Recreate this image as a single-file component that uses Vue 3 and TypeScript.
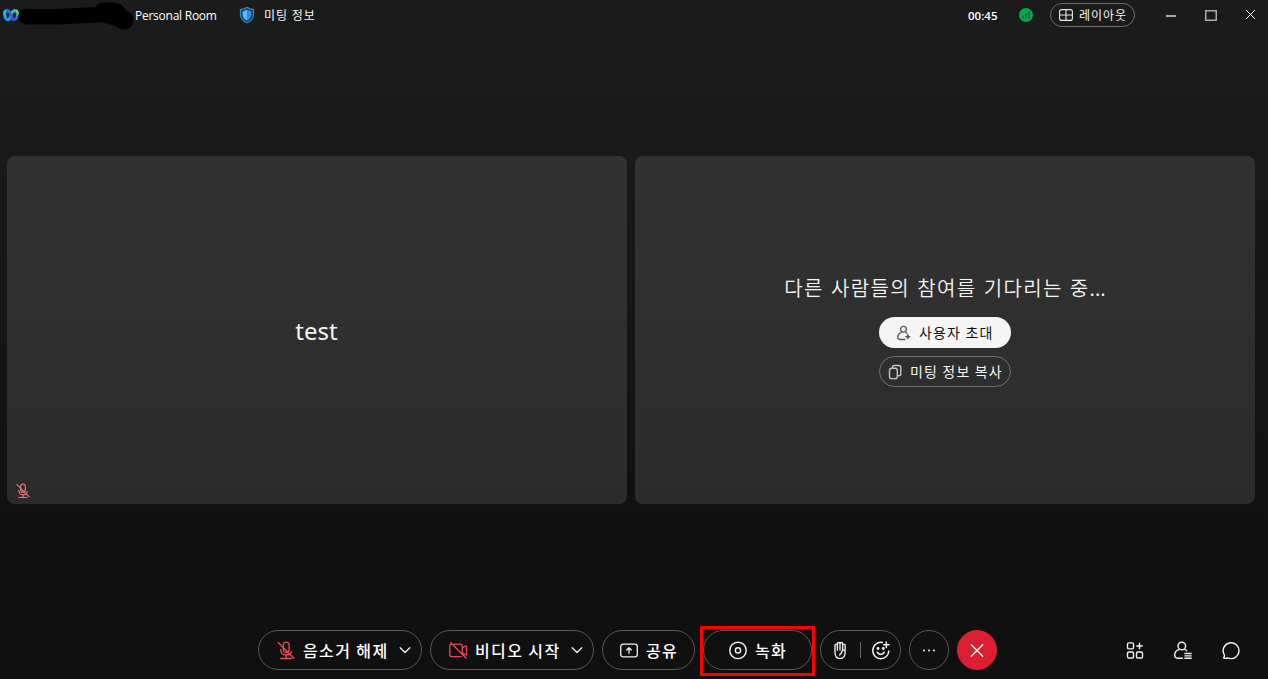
<script setup lang="ts">
interface MediaControl {
  id: string
  label: string
}

const mediaControls: MediaControl[] = [
  { id: 'audio', label: '음소거 해제' },
  { id: 'video', label: '비디오 시작' },
]
</script>

<template>
  <div class="window">
    <header class="titlebar">
      <svg class="logo" viewBox="0 0 16 13">
        <defs>
          <linearGradient id="logo-left" x1="0" y1="0" x2="0" y2="1">
            <stop offset="0" stop-color="#25c6d8" /><stop offset="1" stop-color="#1a9df0" />
          </linearGradient>
          <linearGradient id="logo-right" x1="0" y1="1" x2="1" y2="0">
            <stop offset="0" stop-color="#244cf0" /><stop offset=".55" stop-color="#2d68ed" /><stop offset="1" stop-color="#5ee45c" />
          </linearGradient>
        </defs>
        <path d="M4.500 2C2.700 1.500 1.400 2.500 1.600 4.800 1.900 8.200 2.900 10.700 5 10.700c2 0 2.600-2.700 3.300-5.200C8.900 3 9.800 1.900 11.200 1.900" fill="none" stroke="url(#logo-left)" stroke-width="3" stroke-linecap="round" />
        <path d="M4.500 2c2 0 2.900 2 3.500 4.400.7 2.700 1.300 4.300 3 4.300 2.300 0 3.500-3.400 3.500-6 0-1.700-1.100-2.900-2.700-2.900" fill="none" stroke="url(#logo-right)" stroke-width="2.900" stroke-linecap="round" />
      </svg>
      <div class="owner">
        <svg class="scribble" viewBox="0 0 118 32">
          <path d="M9 16.500C35 18 62 15 87 14.500" fill="none" stroke="#000" stroke-width="15.500" stroke-linecap="round" />
          <path d="M86 11q9-1 14 1" fill="none" stroke="#000" stroke-width="17" stroke-linecap="round" />
          <path d="M91 15L107 20" fill="none" stroke="#000" stroke-width="17" stroke-linecap="round" />
          <circle cx="107" cy="20" r="9.500" />
        </svg>
      </div>
      <span class="room">Personal Room</span>
      <svg class="shield" viewBox="0 0 16 18">
        <path d="M8 1.200C6 2.900 3.900 3.500 1.500 3.700v4.500C1.500 12 4 15 8 16.700c4-1.700 6.500-4.700 6.500-8.500V3.700C12.100 3.500 10 2.900 8 1.200Z" fill="#123450" stroke="#2a8dd4" stroke-width="1.200" />
        <path d="M8 3.500C6.500 4.500 5 5 3.500 5.300v3c0 2.900 1.700 5 4.500 6.400Z" fill="#64b4fa" />
        <path d="M8 3.500c1.500 1 3 1.500 4.500 1.800v3c0 2.900-1.700 5-4.500 6.400Z" fill="#2f8ee0" />
      </svg>
      <span class="info ko">미팅 정보</span>
      <div class="grow"></div>
      <span class="clock">00:45</span>
      <svg class="signal" viewBox="0 0 14 14">
        <circle cx="7" cy="7" r="7" fill="#08a850" />
        <path d="M4 7.500v3M7 5.500v5M10 3.500v7" stroke="#066b35" stroke-width="1.700" />
      </svg>
      <button class="layout ko">
        <svg width="14" height="12" viewBox="0 0 14 12" fill="none" stroke="#e8e8e8" stroke-width="1.100">
          <rect x=".6" y=".6" width="12.800" height="10.800" rx="2" /><path d="M7 .6v10.800M.6 6h12.800" />
        </svg>
        <span>레이아웃</span>
      </button>
      <svg class="win-controls" viewBox="0 0 92 14" fill="none">
        <path d="M1 8h10" stroke="#aaa" stroke-width="2" />
        <rect x="40.750" y="2.750" width="10.500" height="9.500" stroke="#aaa" stroke-width="1.500" />
        <path d="M81 2l9 9M90 2l-9 9" stroke="#fff" stroke-width="1" />
      </svg>
    </header>

    <main class="stage">
      <section class="tile">
        <span class="name">test</span>
        <svg class="tile-mic" viewBox="0 0 14 16" fill="none" stroke="#ee7782" stroke-width="1.100" stroke-linecap="round">
          <rect x="4.700" y="1" width="4.600" height="8.400" rx="2.300" />
          <path d="M2.800 7.300c.1 2.900 1.700 4.500 4.200 4.500s3.900-1.500 4.200-3.200M7 12v2.500M3 14.500h8M1 1.700l12 12" />
        </svg>
      </section>
      <section class="tile waiting">
        <p class="message ko">다른 사람들의 참여를 기다리는 중<span class="dots">...</span></p>
        <button class="pill invite ko">
          <svg width="15" height="16" viewBox="0 0 15 16" fill="none" stroke="#555" stroke-width="1.300" stroke-linecap="round">
            <circle cx="7.500" cy="4.200" r="2.900" />
            <path d="M5 7.500C2.800 8.500 1.700 10.200 1.700 12.300c0 1.600 1.100 2.200 2.900 2.200h4.200M10 7.500l1 .7M11.800 9.700v4M9.800 11.700h4" />
            <path d="M11.800 9.800l1.900 1.900-1.900 1.900-1.900-1.900Z" fill="#555" stroke="none" />
          </svg>
          <span>사용자 초대</span>
        </button>
        <button class="pill copy ko">
          <svg width="14" height="16" viewBox="0 0 14 16" fill="none" stroke="#c4c4c4" stroke-width="1.400">
            <rect x="1.500" y="4.200" width="7.800" height="10.400" rx="2.200" />
            <path d="M4.500 4v-.5c0-1.300.7-2 2-2h4.300c1.300 0 2 .7 2 2v6.200c0 1.300-.7 2-2 2H9.500" />
          </svg>
          <span>미팅 정보 복사</span>
        </button>
      </section>
    </main>

    <footer class="toolbar">
      <button v-for="control in mediaControls" :key="control.id" class="control media ko" :class="control.id">
        <svg v-if="control.id === 'audio'" class="icon" viewBox="0 0 20 20" fill="none" stroke="#e84c5a" stroke-width="1.300" stroke-linecap="round">
          <rect x="7.300" y="2.200" width="5.800" height="10.200" rx="2.900" />
          <path d="M4.700 9.700c.1 3.500 2.400 5.300 5.500 5.300 2.700 0 4.600-1.200 5.200-3.500M10.200 15v3.500M4.700 18.500h11M2.200 2.500l15.800 15.800" />
        </svg>
        <svg v-else class="icon" viewBox="0 0 20 20" fill="none" stroke="#e84c5a" stroke-width="1.300" stroke-linecap="round" stroke-linejoin="round">
          <path d="M6 4.200h6c1.500 0 2.300.8 2.300 2.300v7.500M3.300 4.200c-1 0-1.500.7-1.500 1.800v8.700c0 1.400.6 2 2 2h9.600M14.500 7.800l2.800-1.700c.6-.4 1.200-.1 1.200.6v7.500c0 .7-.6 1-1.200.6l-2.800-1.700M2.700 2.700l15.300 15.300" />
        </svg>
        <span class="label">{{ control.label }}</span>
        <svg class="chevron" width="12" height="8" viewBox="0 0 12 8" fill="none" stroke="#f2f2f2" stroke-width="1.300" stroke-linecap="round" stroke-linejoin="round"><path d="M1.200 1.800L6 6.500l4.800-4.700" /></svg>
      </button>

      <button class="control share ko">
        <svg class="icon" viewBox="0 0 20 20" fill="none" stroke="#f2f2f2" stroke-width="1.300" stroke-linecap="round" stroke-linejoin="round">
          <rect x="1.700" y="4.200" width="16.600" height="12.600" rx="2.400" /><path d="M10 13.200V7.800M7.700 10L10 7.700l2.300 2.300" />
        </svg>
        <span class="label">공유</span>
      </button>

      <div class="record-slot">
        <button class="control record ko">
          <svg class="icon" viewBox="0 0 20 20" fill="none" stroke="#f2f2f2" stroke-width="1.400"><circle cx="10" cy="10.400" r="8.200" /><circle cx="10" cy="10.400" r="2.600" /></svg>
          <span class="label">녹화</span>
        </button>
        <div class="highlight"></div>
      </div>

      <div class="control reactions">
        <svg class="icon" viewBox="0 0 20 20" fill="none" stroke="#f2f2f2" stroke-width="1.350" stroke-linecap="round" stroke-linejoin="round">
          <path d="M5 12.500V5.300c0-1.600 2.400-1.600 2.400 0V10.300 3.800c0-1.700 2.600-1.700 2.600 0V10 3.800c0-1.700 2.600-1.700 2.600 0V10 5.300c0-1.600 2.500-1.600 2.500 0v7.300c0 3.900-1.900 5.900-5 5.900s-5.100-2.200-5.100-6ZM14.800 9.900c-2.500.1-3.500 1.500-3.400 3.400-.9.300-1.500.8-1.700 1.700" />
        </svg>
        <span class="divider"></span>
        <svg class="icon" viewBox="0 0 20 20" fill="none" stroke="#f2f2f2" stroke-width="1.500" stroke-linecap="round">
          <path d="M11.300 2.500C6.200 1.600 1.800 5.500 1.800 10.500a8 8 0 0 0 16 .4M15.300 2v5.400M12.600 4.700h5.400M6.200 12.200c1.500 2.900 5.600 2.900 7.100 0" />
          <circle cx="7" cy="8.500" r=".7" fill="#f2f2f2" /><circle cx="12.300" cy="8.500" r=".7" fill="#f2f2f2" />
        </svg>
      </div>
      <button class="control round">
        <svg class="icon" viewBox="0 0 20 20" fill="#f2f2f2"><circle cx="5" cy="10.400" r="1" /><circle cx="10" cy="10.400" r="1" /><circle cx="15" cy="10.400" r="1" /></svg>
      </button>
      <button class="control round leave">
        <svg class="icon" viewBox="0 0 20 20" fill="none" stroke="#fff" stroke-width="1.300" stroke-linecap="round"><path d="M4.300 4.800l11.400 11.400M15.700 4.800L4.300 16.200" /></svg>
      </button>

      <nav class="panels">
        <svg class="icon" viewBox="0 0 20 20" fill="none" stroke="#f2f2f2" stroke-width="1.400" stroke-linecap="round">
          <rect x="2.500" y="2.900" width="6" height="6" rx="1.300" /><rect x="2.500" y="12" width="6" height="6" rx="1.300" /><rect x="11.500" y="12" width="6" height="6" rx="1.300" /><path d="M14.500 3.300v5.400M11.800 6h5.400" />
        </svg>
        <svg class="icon" viewBox="0 0 20 20" fill="none" stroke="#f2f2f2" stroke-width="1.400" stroke-linecap="round">
          <circle cx="8.800" cy="6" r="3.800" />
          <path d="M5.700 9.700C3.200 10.600 1.700 12.700 1.700 15.200c0 2 1.400 3 3.600 3h4.200M12 9.700c.7.200 1.300.6 1.700 1M11.900 13.500h6.300M11.900 15.900h6.300M11.900 18.300h6.300" />
        </svg>
        <svg class="icon" viewBox="0 0 20 20" fill="none" stroke="#f2f2f2" stroke-width="1.400" stroke-linejoin="round">
          <path d="M2.500 17.900c.9-.9 1.200-2 .8-3.100A7.900 7.900 0 1 1 6.800 17.900c-1.500.6-3 .6-4.300 0Z" />
        </svg>
      </nav>
    </footer>
  </div>
</template>

<style>
body { background: #111; }
</style>

<style scoped>
.window {
  width: 1268px;
  height: 679px;
  box-sizing: border-box;
  overflow: hidden;
  display: flex;
  flex-direction: column;
  background: linear-gradient(#1b1b1b 0, #191919 150px, #101010 560px, #101010 100%);
  color: #f4f4f4;
  font-family: "Noto Sans", "Noto Sans CJK KR", sans-serif;
}
.ko { font-family: "Noto Sans CJK KR", sans-serif; }
button { margin: 0; padding: 0; background: none; color: inherit; border: 0; }
svg { display: block; flex: none; }
.titlebar { height: 30px; flex: none; display: flex; align-items: center; font-size: 12px; white-space: nowrap; }
.logo { width: 16px; height: 13px; margin-left: 3px; }
.owner { width: 116px; height: 30px; }
.scribble { width: 118px; height: 32px; margin-left: -2px; }
.room { width: 105px; font-family: "Open Sans", sans-serif; font-weight: 500; letter-spacing: -0.250px; color: #fff; }
.shield { width: 16px; height: 18px; margin-left: -1px; }
.info { margin-left: 9px; letter-spacing: 1px; padding-bottom: 2px; }
.grow { flex: 1; }
.clock { font-family: "Open Sans", sans-serif; font-weight: 600; font-size: 11.500px; width: 51px; color: #fff; }
.signal { width: 14px; height: 14px; }
.layout { width: 85px; height: 24px; margin-left: 17px; box-sizing: border-box; border: 1px solid #6b6b6b; border-radius: 12px; display: flex; align-items: center; padding-left: 8px; gap: 6px; font-size: 12px; letter-spacing: 1px; }
.layout span { padding-bottom: 2px; }
.win-controls { width: 92px; height: 14px; margin: 0 11px 0 30px; }

.stage { flex: none; display: grid; grid-template-columns: 620px 620px; gap: 8px; height: 348px; margin: 126px 0 0 7px; }
.tile { position: relative; display: flex; flex-direction: column; align-items: center; justify-content: center; border-radius: 8px; background: linear-gradient(#323232, #2b2b2b); }
.name { font-size: 24px; line-height: 34px; margin-right: 1px; padding-top: 2px; }
.tile-mic { position: absolute; left: 9px; bottom: 5px; width: 14px; height: 16px; }
.waiting { justify-content: flex-start; }
.message { margin: 117px 0 0; height: 30px; line-height: 30px; font-size: 20px; letter-spacing: 1.350px; word-spacing: 1.400px; white-space: nowrap; font-weight: 350; }
.dots { letter-spacing: 0; }
.pill { width: 132px; height: 31px; box-sizing: border-box; border-radius: 16px; display: flex; align-items: center; font-size: 14px; letter-spacing: 1.150px; white-space: nowrap; }
.pill span { padding-bottom: 2px; }
.invite { margin-top: 14px; padding-left: 17px; gap: 8px; background: #f5f5f5; color: #111; }
.copy { margin-top: 8px; padding-left: 8px; gap: 8px; border: 1px solid #707070; }

.toolbar { position: relative; flex: none; display: flex; gap: 8px; height: 40px; margin: 126px 0 0 258px; }
.control { height: 40px; box-sizing: border-box; border: 1px solid #585858; border-radius: 20px; display: flex; align-items: center; white-space: nowrap; }
.icon { width: 20px; height: 20px; }
.label { font-size: 16px; letter-spacing: 1.400px; font-weight: 500; color: #fff; }
.media { width: 164px; padding-left: 17px; }
.media .label { margin-left: 7px; width: 89px; text-align: left; }
.chevron { margin-left: 7px; }
.share { width: 93px; padding-left: 16px; gap: 7px; }
.record-slot { position: relative; }
.record { width: 109px; padding-left: 24px; gap: 7px; }
.highlight { position: absolute; left: -3px; top: -4px; width: 115px; height: 50px; box-sizing: border-box; border: 3px solid #f00; }
.reactions { width: 81px; padding-left: 9px; }
.divider { width: 1px; height: 16px; margin: 0 10px; background: #666; }
.round { width: 40px; justify-content: center; }
.leave { border-color: #dc1f30; background: #dc1f30; }
.panels { display: flex; align-items: center; gap: 28px; margin-left: 120px; }
</style>
